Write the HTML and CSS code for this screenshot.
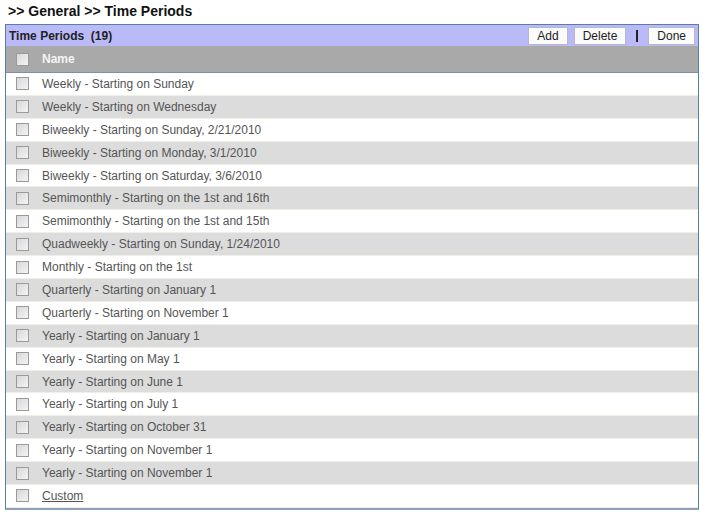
FILE: index.html
```html
<!DOCTYPE html>
<html>
  <head>
    <title>Time Periods</title>
    <link rel="stylesheet" href="styles.css">
  </head>
  <body>
    <h1 class="crumb">&gt;&gt; General &gt;&gt; Time Periods</h1>
    <div class="panel">
      <div class="panel-head">
        <span class="panel-title">Time Periods&nbsp; (19)</span>
        <div class="actions">
          <button class="btn">Add</button>
          <button class="btn">Delete</button>
          <span class="sep"></span>
          <button class="btn">Done</button>
        </div>
      </div>
      <table class="list">
        <thead>
          <tr>
            <th class="check"><span class="box"></span></th>
            <th>Name</th>
          </tr>
        </thead>
        <tbody>
          <tr><td class="check"><span class="box"></span></td><td>Weekly - Starting on Sunday</td></tr>
          <tr><td class="check"><span class="box"></span></td><td>Weekly - Starting on Wednesday</td></tr>
          <tr><td class="check"><span class="box"></span></td><td>Biweekly - Starting on Sunday, 2/21/2010</td></tr>
          <tr><td class="check"><span class="box"></span></td><td>Biweekly - Starting on Monday, 3/1/2010</td></tr>
          <tr><td class="check"><span class="box"></span></td><td>Biweekly - Starting on Saturday, 3/6/2010</td></tr>
          <tr><td class="check"><span class="box"></span></td><td>Semimonthly - Starting on the 1st and 16th</td></tr>
          <tr><td class="check"><span class="box"></span></td><td>Semimonthly - Starting on the 1st and 15th</td></tr>
          <tr><td class="check"><span class="box"></span></td><td>Quadweekly - Starting on Sunday, 1/24/2010</td></tr>
          <tr><td class="check"><span class="box"></span></td><td>Monthly - Starting on the 1st</td></tr>
          <tr><td class="check"><span class="box"></span></td><td>Quarterly - Starting on January 1</td></tr>
          <tr><td class="check"><span class="box"></span></td><td>Quarterly - Starting on November 1</td></tr>
          <tr><td class="check"><span class="box"></span></td><td>Yearly - Starting on January 1</td></tr>
          <tr><td class="check"><span class="box"></span></td><td>Yearly - Starting on May 1</td></tr>
          <tr><td class="check"><span class="box"></span></td><td>Yearly - Starting on June 1</td></tr>
          <tr><td class="check"><span class="box"></span></td><td>Yearly - Starting on July 1</td></tr>
          <tr><td class="check"><span class="box"></span></td><td>Yearly - Starting on October 31</td></tr>
          <tr><td class="check"><span class="box"></span></td><td>Yearly - Starting on November 1</td></tr>
          <tr><td class="check"><span class="box"></span></td><td>Yearly - Starting on November 1</td></tr>
          <tr><td class="check"><span class="box"></span></td><td><a href="#">Custom</a></td></tr>
        </tbody>
      </table>
    </div>
  </body>
</html>
```

FILE: styles.css
```css
body {
  font-family: Arial, "Liberation Sans", sans-serif;
  margin: 0;
  padding: 3px 5px 0 5px;
  width: 694px;
  background-color: #fff;
}
.crumb {
  font-size: 14px;
  font-weight: bold;
  color: #111;
  margin: 0 0 4px 3px;
  line-height: 17px;
}
.panel {
  border: 1px solid #5d7ea3;
  border-bottom-width: 2px;
  border-bottom-color: #8aa2bb;
}
.panel-head {
  display: flex;
  align-items: center;
  justify-content: space-between;
  background-color: #babaf8;
  height: 21px;
  padding: 0 3px;
}
.panel-title {
  font-size: 12px;
  font-weight: bold;
  color: #222;
}
.actions {
  display: flex;
  align-items: center;
  gap: 6px;
}
.btn {
  font-family: Arial, "Liberation Sans", sans-serif;
  font-size: 12px;
  color: #222;
  background-color: #fbfbfb;
  border: 1px solid #b8b8c8;
  height: 18px;
  padding: 0 8px;
}
.actions .sep {
  width: 0;
  height: 12px;
  border-left: 2px solid #222;
  margin: 0 4px;
}
.list {
  width: 100%;
  border-collapse: collapse;
  font-size: 12px;
}
.list th {
  background-color: #a9a9a9;
  color: #f4f4f4;
  text-align: left;
  font-weight: bold;
  height: 26px;
  padding: 0;
  border-bottom: 1px solid #7d90a8;
}
.list tbody tr {
  height: 22.9px;
}
.list td {
  padding: 0;
  color: #555;
  border-bottom: 1px solid #f0efe6;
}
.list tbody tr:nth-child(even) td {
  background-color: #dcdcdc;
}
.list .check {
  width: 26px;
  padding-left: 10px;
}
.box {
  display: block;
  width: 11px;
  height: 11px;
  border: 1px solid #9a9a9a;
  background: linear-gradient(135deg, #d8d8d8, #f4f4f4);
}
.list a {
  color: #555;
}
```
